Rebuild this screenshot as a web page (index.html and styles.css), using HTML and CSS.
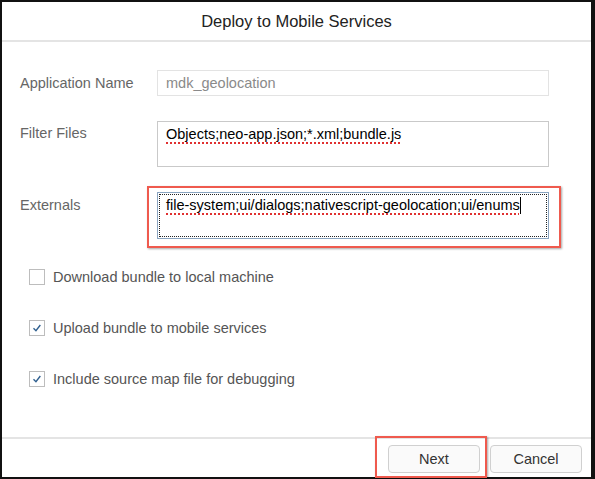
FILE: index.html
```html
<!DOCTYPE html>
<html>
<head>
<meta charset="utf-8">
<link rel="stylesheet" href="styles.css">
</head>
<body>
<div class="frame">
  <header class="head">Deploy to Mobile Services</header>
  <main class="content">
    <div class="form">
      <div class="label label-mid">Application Name</div>
      <div class="input input-disabled">mdk_geolocation</div>

      <div class="label">Filter Files</div>
      <div class="input textarea"><span class="sp">Objects;neo-app.json;*.xml;bundle.js</span></div>

      <div class="label label-ext">Externals</div>
      <div class="ext-wrap">
        <div class="input textarea focused"><span class="sp">file-system;ui/dialogs;nativescript-geolocation;ui/enums</span><span class="caret"></span></div>
        <div class="annot annot-ext"></div>
      </div>
    </div>

    <div class="checks">
      <div class="check"><span class="box"></span><span>Download bundle to local machine</span></div>
      <div class="check"><span class="box on"><svg viewBox="0 0 16 16" width="14" height="14"><path d="M4 8.2 L6.8 11 L11.8 4.6" fill="none" stroke="#2f5f8f" stroke-width="1.6"/></svg></span><span>Upload bundle to mobile services</span></div>
      <div class="check"><span class="box on"><svg viewBox="0 0 16 16" width="14" height="14"><path d="M4 8.2 L6.8 11 L11.8 4.6" fill="none" stroke="#2f5f8f" stroke-width="1.6"/></svg></span><span>Include source map file for debugging</span></div>
    </div>
  </main>
  <footer class="foot">
    <div class="btn-wrap">
      <button class="btn">Next</button>
      <div class="annot annot-next"></div>
    </div>
    <button class="btn">Cancel</button>
  </footer>
</div>
</body>
</html>
```

FILE: styles.css
```css
* { box-sizing: border-box; }
html, body { margin: 0; padding: 0; }
body {
  background: #111;
  width: 595px;
  height: 479px;
  padding: 2px 4px 2px 2px;
  font-family: "Liberation Sans", Arial, sans-serif;
}
.frame {
  background: #fff;
  height: 475px;
  display: flex;
  flex-direction: column;
}
.head {
  height: 40px;
  border-bottom: 2px solid #e4e4e4;
  display: flex;
  align-items: center;
  justify-content: center;
  font-size: 16.5px;
  color: #222;
  padding-top: 1px;
}
.content {
  flex: 1;
  padding: 28px 0 0 18px;
}
.form {
  display: grid;
  grid-template-columns: 137px 392px;
  row-gap: 25px;
  align-items: start;
}
.label {
  font-size: 14.5px;
  color: #666;
  padding-top: 4px;
}
.label-mid { padding-top: 5px; }
.label-ext { padding-top: 5px; }
.input {
  border: 1px solid #e3e3e3;
  height: 26px;
  padding: 4px 8px 0 8px;
  font-size: 14.5px;
  color: #000;
  white-space: nowrap;
}
.input-disabled { color: #8a8a8a; }
.textarea {
  height: 46px;
  border-color: #c9c9c9;
  padding-top: 4px;
}
.sp {
  text-decoration: underline dotted #e03030;
  text-underline-offset: 3px;
  text-decoration-thickness: 1.5px;
}
.ext-wrap { position: relative; }
.focused {
  height: 47px;
  border: 1px solid #8aa4c0;
  outline: 1px dotted #222;
  outline-offset: -3px;
}
.caret {
  display: inline-block;
  width: 1px;
  height: 17px;
  background: #000;
  vertical-align: -4px;
}
.annot {
  position: absolute;
  border: 2px solid #ef5a4e;
  box-shadow: 1px 1px 2px rgba(0,0,0,0.35);
  pointer-events: none;
}
.annot-ext {
  left: -10px;
  top: -6px;
  width: 414px;
  height: 62px;
}
.checks {
  display: flex;
  flex-direction: column;
  gap: 35px;
  padding: 30px 0 0 9px;
}
.check {
  display: flex;
  align-items: center;
  gap: 8px;
  font-size: 14.5px;
  color: #555;
  height: 16px;
}
.box {
  width: 16px;
  height: 16px;
  border: 1px solid #bdbdbd;
  display: flex;
  align-items: center;
  justify-content: center;
  background: #fff;
}
.foot {
  height: 40px;
  border-top: 2px solid #e4e4e4;
  display: flex;
  justify-content: flex-end;
  align-items: flex-start;
  gap: 10px;
  padding: 6px 9px 0 0;
}
.btn-wrap { position: relative; }
.btn {
  width: 92px;
  height: 28px;
  border: 1px solid #d0d0d0;
  border-radius: 4px;
  background: #fafafa;
  font-family: "Liberation Sans", Arial, sans-serif;
  font-size: 14.5px;
  color: #333;
  padding: 0;
}
.annot-next {
  left: -13px;
  top: -9px;
  width: 112px;
  height: 42px;
}
```
